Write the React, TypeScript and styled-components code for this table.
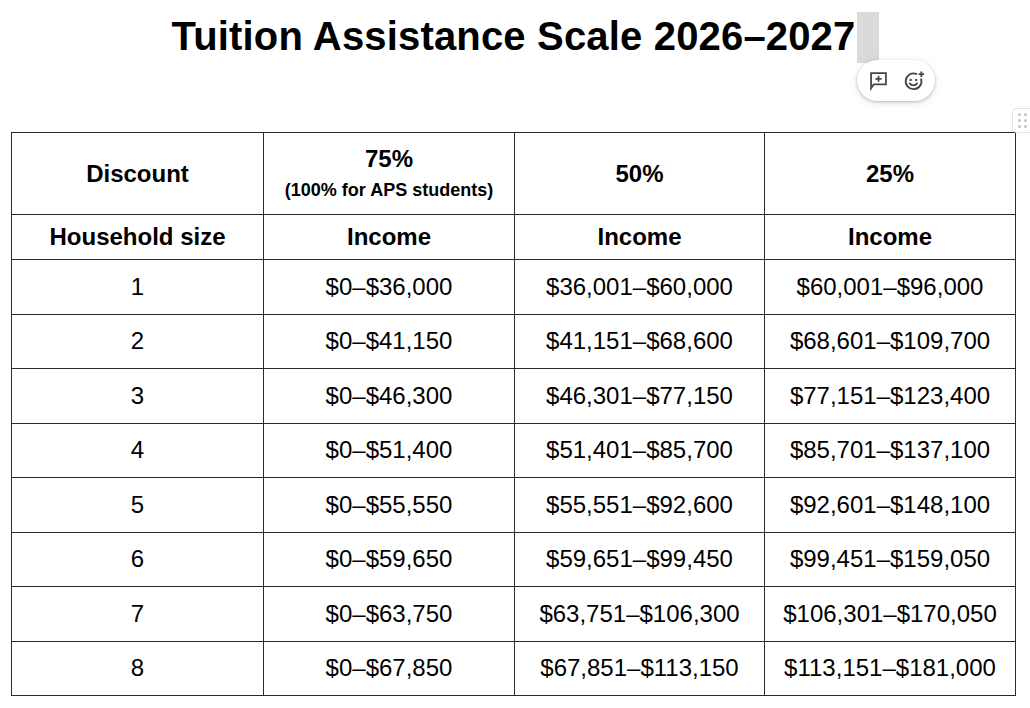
import React from 'react';
import styled, { createGlobalStyle } from 'styled-components';

const GlobalStyle = createGlobalStyle`
  html, body {
    margin: 0;
    padding: 0;
    background: #ffffff;
    overflow: hidden;
  }

  body {
    font-family: 'Liberation Sans', Arial, Helvetica, sans-serif;
    color: #000000;
  }
`;

const Page = styled.div`
  width: 1030px;
  height: 708px;
  padding: 13px 0 0 11px;
  box-sizing: border-box;
`;

const TitleRow = styled.div`
  width: 1005px;
  display: flex;
  justify-content: center;
  margin-bottom: 73px;
`;

const Title = styled.h1`
  position: relative;
  margin: 0;
  font-size: 40px;
  line-height: 46px;
  font-weight: 700;
  letter-spacing: 0.17px;
`;

const Caret = styled.span`
  position: absolute;
  left: calc(100% + 2px);
  top: -1px;
  width: 22px;
  height: 51px;
  background: #dadada;
`;

const ActionPill = styled.div`
  position: absolute;
  left: 0;
  top: 48px;
  width: 78px;
  height: 41px;
  border-radius: 21px;
  background: #ffffff;
  box-shadow: 0 1px 3px rgba(0, 0, 0, 0.22), 0 2px 8px rgba(0, 0, 0, 0.1);
  display: flex;
  align-items: center;
  justify-content: center;
  gap: 13px;
  color: #444746;
`;

const IconButton = styled.span`
  display: flex;
  width: 22px;
  height: 22px;
  align-items: center;
  justify-content: center;
`;

const TableWrap = styled.div`
  position: relative;
  width: 1005px;
`;

const DragHandle = styled.div`
  position: absolute;
  top: -24px;
  right: -15px;
  width: 18px;
  height: 23px;
  border: 1px solid #e3e3e3;
  border-right: none;
  border-radius: 5px 0 0 5px;
  background: #ffffff;
  display: grid;
  grid-template-columns: repeat(2, 3px);
  grid-auto-rows: 3px;
  column-gap: 3px;
  row-gap: 3px;
  align-content: center;
  justify-content: center;
`;

const Dot = styled.span`
  width: 3px;
  height: 3px;
  border-radius: 50%;
  background: #c4c4c4;
`;

const Table = styled.table`
  width: 1005px;
  table-layout: fixed;
  border-collapse: collapse;
`;

const Cell = styled.td<{ $bold?: boolean; $height: number }>`
  border: 1px solid #2b2b2b;
  padding: 0;
  height: ${({ $height }) => $height}px;
  text-align: center;
  vertical-align: middle;
  font-size: 24px;
  line-height: 28px;
  font-weight: ${({ $bold }) => ($bold ? 700 : 400)};
`;

const MainPercent = styled.div`
  font-size: 24px;
  line-height: 32px;
  font-weight: 700;
`;

const Note = styled.div`
  font-size: 18px;
  line-height: 28px;
  font-weight: 700;
  margin-top: 1px;
`;

const AddCommentIcon = () => (
  <svg width="21" height="21" viewBox="0 0 24 24" fill="none" stroke="currentColor" strokeWidth="2">
    <path d="M3.5 21V3.5h17v13h-14z" strokeLinejoin="miter" />
    <path d="M12 6.5v7M8.5 10h7" />
  </svg>
);

const AddReactionIcon = () => (
  <svg width="22" height="22" viewBox="0 0 24 24" fill="none" stroke="currentColor" strokeWidth="2">
    <path d="M14.6 4.3A8.6 8.6 0 1 0 19.8 10" strokeLinecap="round" />
    <path d="M20 1.5v6M17 4.5h6" />
    <circle cx="8.3" cy="10.8" r="1.3" fill="currentColor" stroke="none" />
    <circle cx="14.3" cy="10.8" r="1.3" fill="currentColor" stroke="none" />
    <path d="M7.4 14.6c1.9 2.8 5.9 2.8 7.8 0" strokeLinecap="round" />
  </svg>
);

const rows: [string, string, string, string][] = [
  ['1', '$0–$36,000', '$36,001–$60,000', '$60,001–$96,000'],
  ['2', '$0–$41,150', '$41,151–$68,600', '$68,601–$109,700'],
  ['3', '$0–$46,300', '$46,301–$77,150', '$77,151–$123,400'],
  ['4', '$0–$51,400', '$51,401–$85,700', '$85,701–$137,100'],
  ['5', '$0–$55,550', '$55,551–$92,600', '$92,601–$148,100'],
  ['6', '$0–$59,650', '$59,651–$99,450', '$99,451–$159,050'],
  ['7', '$0–$63,750', '$63,751–$106,300', '$106,301–$170,050'],
  ['8', '$0–$67,850', '$67,851–$113,150', '$113,151–$181,000'],
];

const App: React.FC = () => {
  return (
    <>
      <GlobalStyle />
      <Page>
        <TitleRow>
          <Title>
            Tuition Assistance Scale 2026–2027
            <Caret>
              <ActionPill>
                <IconButton>
                  <AddCommentIcon />
                </IconButton>
                <IconButton>
                  <AddReactionIcon />
                </IconButton>
              </ActionPill>
            </Caret>
          </Title>
        </TitleRow>

        <TableWrap>
          <DragHandle>
            {Array.from({ length: 6 }).map((_, i) => (
              <Dot key={i} />
            ))}
          </DragHandle>
          <Table>
            <colgroup>
              <col style={{ width: 252 }} />
              <col style={{ width: 251 }} />
              <col style={{ width: 250 }} />
              <col style={{ width: 251 }} />
            </colgroup>
            <tbody>
              <tr>
                <Cell $bold $height={81}>Discount</Cell>
                <Cell $bold $height={81}>
                  <MainPercent>75%</MainPercent>
                  <Note>(100% for APS students)</Note>
                </Cell>
                <Cell $bold $height={81}>50%</Cell>
                <Cell $bold $height={81}>25%</Cell>
              </tr>
              <tr>
                <Cell $bold $height={44}>Household size</Cell>
                <Cell $bold $height={44}>Income</Cell>
                <Cell $bold $height={44}>Income</Cell>
                <Cell $bold $height={44}>Income</Cell>
              </tr>
              {rows.map((row) => (
                <tr key={row[0]}>
                  {row.map((value, i) => (
                    <Cell key={i} $height={53.5}>
                      {value}
                    </Cell>
                  ))}
                </tr>
              ))}
            </tbody>
          </Table>
        </TableWrap>
      </Page>
    </>
  );
};

export default App;
